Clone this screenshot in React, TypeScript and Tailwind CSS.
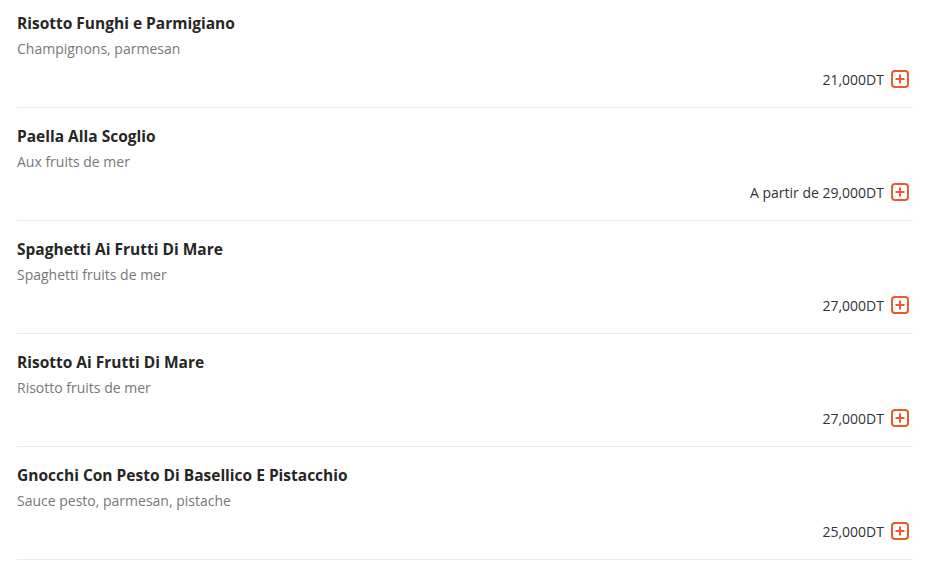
import React from 'react';

type Dish = { name: string; desc: string; price: string };

const dishes: Dish[] = [
  { name: 'Risotto Funghi e Parmigiano', desc: 'Champignons, parmesan', price: '21,000DT' },
  { name: 'Paella Alla Scoglio', desc: 'Aux fruits de mer', price: 'A partir de 29,000DT' },
  { name: 'Spaghetti Ai Frutti Di Mare', desc: 'Spaghetti fruits de mer', price: '27,000DT' },
  { name: 'Risotto Ai Frutti Di Mare', desc: 'Risotto fruits de mer', price: '27,000DT' },
  { name: 'Gnocchi Con Pesto Di Basellico E Pistacchio', desc: 'Sauce pesto, parmesan, pistache', price: '25,000DT' },
];

const AddIcon = () => (
  <svg width="20" height="20" viewBox="0 0 20 20" fill="none" className="text-[#ea5a2c]">
    <rect x="2" y="2" width="16" height="16" rx="3" stroke="currentColor" strokeWidth="2" />
    <path d="M10 5.5v9M5.5 10h9" stroke="currentColor" strokeWidth="2" />
  </svg>
);

const App: React.FC = () => {
  return (
    <div className="bg-white min-h-screen w-[934px] px-[17px]" style={{ fontFamily: '"Open Sans", Lato, sans-serif' }}>
      {dishes.map((d, i) => (
        <div key={d.name} className={`border-b border-[#e9e9e9] pb-[18px] w-[896px] ${i === 0 ? 'pt-[13px]' : 'pt-[18px]'}`}>
          <h3 className="text-[15.5px] leading-5 font-bold text-[#262626]">{d.name}</h3>
          <p className="mt-[6px] text-[14px] leading-5 text-[#777]">{d.desc}</p>
          <div className="mt-[10px] h-5 flex items-center justify-end gap-[6px] mr-[3px]">
            <span className="text-[14px] text-[#333]">{d.price}</span>
            <button className="w-5 h-5 flex items-center justify-center">
              <AddIcon />
            </button>
          </div>
        </div>
      ))}
    </div>
  );
};

export default App;
